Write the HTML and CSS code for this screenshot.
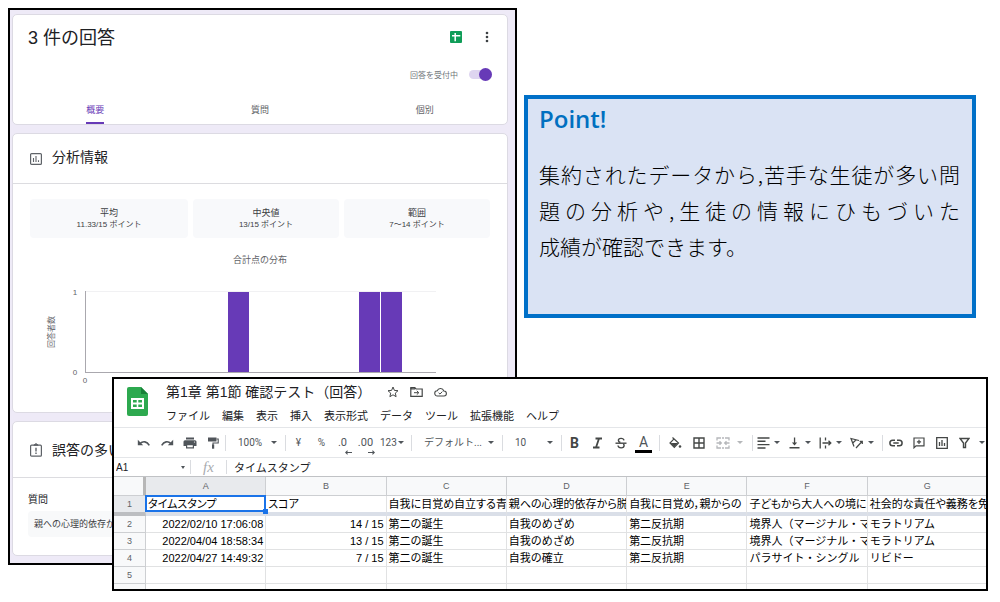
FILE: index.html
```html
<!DOCTYPE html>
<html lang="ja">
<head>
<meta charset="utf-8">
<title>回答の集計</title>
<link rel="stylesheet" href="styles.css">
</head>
<body>
<main class="stage">
  <section class="forms">
    <article class="card">
      <header class="summary">
        <h1 class="summary-title">3 件の回答</h1>
        <button class="plain" aria-label="スプレッドシートで表示">
          <svg width="12" height="12" viewBox="0 0 12 12"><rect width="12" height="12" rx="1" fill="#0f9d58"/><path d="M2 4.7h8.3M5.2 2v8.3" stroke="#fff" stroke-width="1.5"/></svg>
        </button>
        <button class="plain" aria-label="その他">
          <svg width="4" height="12" viewBox="0 0 4 12" fill="#3c4043"><circle cx="2" cy="2" r="1.3"/><circle cx="2" cy="6" r="1.3"/><circle cx="2" cy="10" r="1.3"/></svg>
        </button>
      </header>
      <label class="accepting">回答を受付中<input type="checkbox" class="toggle" checked></label>
      <nav class="tabs">
        <button class="tab tab-active">概要</button>
        <button class="tab">質問</button>
        <button class="tab">個別</button>
      </nav>
    </article>

    <article class="card">
      <header class="card-head">
        <svg width="12" height="12" viewBox="0 0 12 12" fill="none" stroke="#5f6368"><rect x=".6" y=".6" width="10.8" height="10.8" rx="1" stroke-width="1.2"/><path d="M3.5 5v4M6 3v6M8.5 7.3V9" stroke-width="1.1"/></svg>
        <h2 class="card-title">分析情報</h2>
      </header>
      <div class="stats">
        <div class="stat"><span class="stat-name">平均</span><span class="stat-value">11.33/15 ポイント</span></div>
        <div class="stat"><span class="stat-name">中央値</span><span class="stat-value">13/15 ポイント</span></div>
        <div class="stat"><span class="stat-name">範囲</span><span class="stat-value">7～14 ポイント</span></div>
      </div>
      <h3 class="chart-title">合計点の分布</h3>
      <svg class="chart" viewBox="0 0 460 120" role="img" aria-label="合計点の分布">
        <path d="M56 20.5h350" stroke="#f1f1f3"/>
        <g fill="#673ab7"><rect x="198" y="21" width="21" height="80"/><rect x="329" y="21" width="21" height="80"/><rect x="351" y="21" width="21" height="80"/></g>
        <path d="M55.5 20v81M55 101.5h351" stroke="#aaa8ae" fill="none"/>
        <g class="chart-num"><text x="45" y="24">1</text><text x="45" y="104">0</text>
        <text x="55" y="112">0</text><text x="99" y="112">2</text><text x="143" y="112">4</text><text x="187" y="112">6</text><text x="230" y="112">8</text><text x="274" y="112">10</text><text x="318" y="112">12</text><text x="362" y="112">14</text><text x="405" y="112">16</text></g>
        <text class="chart-axis" transform="translate(24 61) rotate(-90)">回答者数</text>
      </svg>
    </article>

    <article class="card card-last">
      <header class="card-head card-head-tall">
        <svg width="12" height="14" viewBox="0 0 12 14" fill="none" stroke="#5f6368"><rect x=".6" y="2.2" width="10.8" height="11" rx="1" stroke-width="1.2"/><path d="M3.8 2.2 6 .6l2.2 1.6z" fill="#5f6368"/><path d="M6 4.8v3.7M6 9.6v1.4" stroke-width="1.4"/></svg>
        <h2 class="card-title">誤答の多い</h2>
      </header>
      <h3 class="question-label">質問</h3>
      <p class="question">親への心理的依存か</p>
    </article>
  </section>

  <aside class="point">
    <h2 class="point-title">Point!</h2>
    <p class="point-text"><span class="line spread">集約されたデータから,苦手な生徒が多い問</span><span class="line spread">題の分析や,生徒の情報にひもづいた</span><span class="line">成績が確認できます。</span></p>
  </aside>

  <section class="sheet">
    <header class="sheet-head">
      <svg width="21" height="29" viewBox="0 0 21 29"><path d="M2 0h12l7 7v20a2 2 0 0 1-2 2H2a2 2 0 0 1-2-2V2a2 2 0 0 1 2-2z" fill="#2da94f"/><path d="M14 0l7 7h-7z" fill="#188038"/><path d="M4 11h13v11H4z" fill="#fff"/><path d="M6 13h3.7v2.5H6zM11.3 13H15v2.5h-3.7zM6 17.5h3.7V20H6zM11.3 17.5H15V20h-3.7z" fill="#2da94f"/></svg>
      <div class="sheet-names">
        <div class="doc-row">
          <h1 class="doc-title">第1章 第1節 確認テスト（回答）</h1>
          <button class="plain" aria-label="スター"><svg width="12" height="12" viewBox="0 0 12 12" fill="none" stroke="#444746"><path d="M6 1l1.4 3.4 3.6.3-2.7 2.4.8 3.6L6 8.8l-3.1 1.9.8-3.6L1 4.7l3.6-.3z"/></svg></button>
          <button class="plain" aria-label="移動"><svg width="13" height="12" viewBox="0 0 13 12" fill="none" stroke="#444746"><path d="M.8 1.6h4l1.2 1.4h6.2v7.4H.8z" stroke-width="1.2"/><path d="M1 2h4v1H1z"/><path d="M4 6.7h4.5M6.8 4.8l2 1.9-2 1.9"/></svg></button>
          <button class="plain" aria-label="保存済み"><svg width="13" height="12" viewBox="0 0 13 12" fill="none" stroke="#444746"><path d="M3.5 10a2.6 2.6 0 0 1-.3-5.200A3.500 3.500 0 0 1 9.800 5 2.500 2.500 0 0 1 10 10z" stroke-width="1.100"/><path d="M4.600 6.800l1.400 1.300 2.300-2.500"/></svg></button>
        </div>
        <nav class="menus">
          <button class="menu">ファイル</button><button class="menu">編集</button><button class="menu">表示</button><button class="menu">挿入</button><button class="menu">表示形式</button><button class="menu">データ</button><button class="menu">ツール</button><button class="menu">拡張機能</button><button class="menu">ヘルプ</button>
        </nav>
      </div>
    </header>

    <div class="toolbar">
      <button class="tool" aria-label="元に戻す"><svg width="14" height="12" viewBox="0 0 14 12" fill="none" stroke="#50555a" stroke-width="1.600"><path d="M3 6.500c3-2.800 7-2.200 9.300 1.800"/><path d="M.8 2.800v5.400h5.400z" fill="#50555a" stroke="none"/></svg></button>
      <button class="tool" aria-label="やり直し"><svg width="14" height="12" viewBox="0 0 14 12" fill="none" stroke="#50555a" stroke-width="1.600"><path d="M11 6.500c-3-2.800-7-2.200-9.300 1.800"/><path d="M13.200 2.800v5.400H7.800z" fill="#50555a" stroke="none"/></svg></button>
      <button class="tool" aria-label="印刷"><svg width="14" height="12" viewBox="0 0 14 12" fill="#50555a"><path d="M3 .5h8v2H3zM2 3.300h10a1.500 1.500 0 0 1 1.500 1.500V9H11V7H3v2H.5V4.800A1.500 1.500 0 0 1 2 3.300z"/><path d="M3.600 7.600h6.800v3.200H3.600z" fill="none" stroke="#50555a" stroke-width="1.200"/><circle cx="11.500" cy="5" r=".6" fill="#fff"/></svg></button>
      <button class="tool" aria-label="書式を貼り付け"><svg width="12" height="12" viewBox="0 0 12 12"><path d="M1 .5h8.500v4H1z" fill="#50555a"/><path d="M9.500 2h1.700v4H6v2" fill="none" stroke="#50555a" stroke-width="1.100"/><path d="M5 7.500h2.200v4.200H5z" fill="#50555a"/></svg></button>
      <span class="sep"></span>
      <span class="pick pick-zoom"><select aria-label="ズーム"><option>100%</option></select></span>
      <span class="sep"></span>
      <button class="tool">¥</button>
      <button class="tool">%</button>
      <button class="tool tool-decimal" aria-label="小数点以下の桁数を減らす"><span class="decimal">.0</span><svg class="under" width="7" height="5" viewBox="0 0 7 5" fill="#50555a"><path d="M0 2.500L2.500 0v2H7v1H2.500v2z"/></svg></button>
      <button class="tool tool-decimal" aria-label="小数点以下の桁数を増やす"><span class="decimal">.00</span><svg class="under" width="7" height="5" viewBox="0 0 7 5" fill="#50555a"><path d="M7 2.500L4.500 0v2H0v1h4.500v2z"/></svg></button>
      <button class="tool more more-format">123</button>
      <span class="sep"></span>
      <span class="pick pick-font"><select aria-label="フォント"><option>デフォルト...</option></select></span>
      <span class="sep"></span>
      <span class="pick pick-size"><select aria-label="フォントサイズ"><option>10</option></select></span>
      <span class="sep"></span>
      <button class="tool" aria-label="太字"><b class="glyph">B</b></button>
      <button class="tool" aria-label="斜体"><svg width="11" height="12" viewBox="0 0 11 12" stroke="#444746" stroke-width="1.800"><path d="M3.500 1.500H10M1 10.500h6.500M7 1.500l-3 9"/></svg></button>
      <button class="tool" aria-label="取り消し線"><svg width="12" height="12" viewBox="0 0 12 12" fill="none" stroke="#444746" stroke-width="1.400"><path d="M9 3.400C8.500.600 3.400.700 3.400 3.400c0 1 .7 1.700 2 2.100M3 8.500c.4 3.200 6.100 3 6.100 0 0-.7-.3-1.200-.8-1.600"/><path d="M.5 6.200h11"/></svg></button>
      <button class="tool" aria-label="テキストの色"><span class="ink">A</span></button>
      <span class="sep sep-wide"></span>
      <button class="tool" aria-label="塗りつぶしの色"><svg width="13" height="12" viewBox="0 0 13 12"><path d="M3.500.500l6 5.500-4.200 4.300L1 6l3.800-3.800" fill="none" stroke="#444746" stroke-width="1.200"/><path d="M1.500 6h7.500l-3.700 4z" fill="#444746"/><circle cx="11" cy="9.500" r="1.300" fill="#444746"/></svg></button>
      <button class="tool" aria-label="枠線"><svg width="12" height="12" viewBox="0 0 12 12" fill="none" stroke="#444746" stroke-width="1.400"><path d="M1 1h10v10H1zM6 1v10M1 6h10"/></svg></button>
      <button class="tool more more-merge" aria-label="セルを結合"><svg width="14" height="12" viewBox="0 0 14 12" fill="none" stroke="#b5b7ba" stroke-width="1.300"><path d="M5 1H1v2.500M9 1h4v2.500M5 11H1V8.500M9 11h4V8.500M6 1h2M6 11h2M.5 6h4.500M13.500 6H9M3.500 4.300 5.300 6 3.500 7.700M10.500 4.300 8.700 6l1.800 1.700"/></svg></button>
      <span class="sep sep-wide"></span>
      <button class="tool more" aria-label="水平方向の配置"><svg width="13" height="12" viewBox="0 0 13 12" stroke="#444746" stroke-width="1.400"><path d="M.5 1h12M.5 4.300h8M.5 7.600h12M.5 11h8"/></svg></button>
      <button class="tool more" aria-label="垂直方向の配置"><svg width="13" height="12" viewBox="0 0 13 12" fill="#444746"><path d="M1.500 10h10v1.500h-10zM5.900.500h1.300v5h2L6.500 8.400 3.900 5.500h2z"/></svg></button>
      <button class="tool more" aria-label="テキストの折り返し"><svg width="13" height="12" viewBox="0 0 13 12" fill="none" stroke="#444746" stroke-width="1.300"><path d="M1.200.500v11M6.500.500v3M6.500 8.500v3M3.500 6h8M9.500 3.800 11.800 6 9.500 8.200"/></svg></button>
      <button class="tool more" aria-label="テキストの回転"><svg width="14" height="12" viewBox="0 0 14 12" fill="none" stroke="#444746" stroke-width="1.200"><path d="M4 9.500 1 1.500l8 2M3 5.800l3.200-3M6 11l6-6.500M9.700 4.300h2.600v2.600"/></svg></button>
      <span class="sep"></span>
      <button class="tool" aria-label="リンクを挿入"><svg width="14" height="12" viewBox="0 0 14 12" fill="none" stroke="#444746" stroke-width="1.500"><path d="M6 3.200H3.700a2.800 2.800 0 0 0 0 5.600H6M8 3.200h2.300a2.800 2.800 0 0 1 0 5.600H8M4.300 6h5.400"/></svg></button>
      <button class="tool" aria-label="コメントを挿入"><svg width="12" height="12" viewBox="0 0 12 12" fill="none" stroke="#444746" stroke-width="1.200"><path d="M1 1h10v7.800H3L1 10.800zM6 2.800v4.200M3.900 4.900h4.200"/></svg></button>
      <button class="tool" aria-label="グラフを挿入"><svg width="12" height="12" viewBox="0 0 12 12" fill="none" stroke="#444746" stroke-width="1.300"><path d="M.7.700h10.600v10.600H.7zM3.500 5v4M6 3v6M8.500 6v3"/></svg></button>
      <button class="tool" aria-label="フィルタを作成"><svg width="11" height="12" viewBox="0 0 11 12" fill="none" stroke="#444746" stroke-width="1.400"><path d="M1 1.500h9L6.500 6v4.500h-2V6z"/></svg></button>
      <button class="tool more more-only" aria-label="フィルタ表示"></button>
    </div>

    <div class="formula">
      <span class="pick pick-name"><input aria-label="名前ボックス" value="A1"></span>
      <span class="sep"></span>
      <i class="fx">fx</i>
      <span class="sep"></span>
      <input class="formula-input" aria-label="数式" value="タイムスタンプ">
    </div>

    <div class="grid-wrap">
    <table class="grid">
      <colgroup><col class="col-num"><col><col><col><col><col><col><col></colgroup>
      <thead><tr><th class="corner"></th><th class="on">A</th><th>B</th><th>C</th><th>D</th><th>E</th><th>F</th><th>G</th></tr></thead>
      <tbody>
        <tr class="frozen"><th class="on">1</th><td class="selected">タイムスタンプ</td><td>スコア</td><td>自我に目覚め自立する青</td><td>親への心理的依存から脱</td><td>自我に目覚め，親からの</td><td>子どもから大人への境に</td><td>社会的な責任や義務を免</td></tr>
        <tr><th>2</th><td class="num">2022/02/10 17:06:08</td><td class="num">14 / 15</td><td>第二の誕生</td><td>自我のめざめ</td><td>第二反抗期</td><td>境界人（マージナル・マ</td><td>モラトリアム</td></tr>
        <tr><th>3</th><td class="num">2022/04/04 18:58:34</td><td class="num">13 / 15</td><td>第二の誕生</td><td>自我のめざめ</td><td>第二反抗期</td><td>境界人（マージナル・マ</td><td>モラトリアム</td></tr>
        <tr><th>4</th><td class="num">2022/04/27 14:49:32</td><td class="num">7 / 15</td><td>第二の誕生</td><td>自我の確立</td><td>第二反抗期</td><td>パラサイト・シングル</td><td>リビドー</td></tr>
        <tr><th>5</th><td></td><td></td><td></td><td></td><td></td><td></td><td></td></tr>
        <tr><th>6</th><td></td><td></td><td></td><td></td><td></td><td></td><td></td></tr>
      </tbody>
    </table>
    </div>
  </section>
</main>
</body>
</html>
```
FILE: styles.css
```css
* { box-sizing: border-box; }
body { margin: 0; background: #fff; color: #202124; font-family: "Liberation Sans", "Noto Sans CJK JP", sans-serif; }
h1, h2, h3, p { margin: 0; font-weight: 400; }
button, input, select { margin: 0; padding: 0; border: 0; background: none; color: inherit; font: inherit; }
svg { display: block; flex: none; }

.stage {
  display: grid;
  grid-template-columns: 104px minmax(0, 405fr) 7px minmax(0, 452fr) 12px;
  grid-template-rows: 369px 188px 26px;
  padding: 8px 12px 0 8px;
}

/* Response summary */
.forms { grid-area: 1 / 1 / 3 / 3; display: flex; flex-direction: column; gap: 8px; padding: 4px 7px 7px 2px; border: 2px solid #000; background: #eeeaf7; overflow: hidden; }
.card { border: 1px solid #dcdae3; border-radius: 5px; background: #fff; }
.card-last { flex: 1; }
.summary { display: flex; align-items: center; gap: 23px; height: 44px; padding: 0 18px 0 15px; }
.summary-title { flex: 1; padding-top: 2px; font-size: 18px; line-height: 24px; }
.plain { display: flex; }
.accepting { display: flex; align-items: center; justify-content: flex-end; gap: 11px; height: 30px; padding-right: 15px; color: #70757a; font-size: 8px; }
.toggle { appearance: none; display: flex; align-items: center; justify-content: flex-end; width: 23px; height: 9px; border-radius: 5px; background: #ded5f0; }
.toggle::before { content: ""; flex: none; width: 13px; height: 13px; border-radius: 50%; background: #673ab7; }
.tabs { display: grid; grid-template-columns: repeat(3, 1fr); justify-items: center; height: 35px; }
.tab { align-self: end; padding-bottom: 5px; border-bottom: 2px solid transparent; color: #5f6368; font-size: 9px; line-height: 14px; }
.tab-active { border-bottom-color: #673ab7; color: #673ab7; }
.card-head { display: flex; align-items: center; gap: 10px; height: 50px; padding-left: 17px; border-bottom: 1px solid #dcdce0; }
.card-head-tall { height: 56px; }
.card-title { padding-bottom: 3px; font-size: 14px; line-height: 20px; }
.card-head-tall .card-title { padding-bottom: 0; }
.stats { display: grid; grid-template-columns: 158fr 146fr 146fr; gap: 5px; padding: 15px 17px 0; }
.stat { display: flex; flex-direction: column; align-items: center; padding: 8px 0 7px; border-radius: 4px; background: #f8f9fb; color: #3c4043; }
.stat-name { font-size: 9px; line-height: 12px; }
.stat-value { font-size: 8px; line-height: 12px; }
.chart-title { padding-top: 14px; color: #5f6368; font-size: 9px; line-height: 16px; text-align: center; }
.chart { width: calc(100% - 34px); margin: 3px 17px 21px; }
.chart-num { fill: #5f6368; font-size: 8px; text-anchor: middle; }
.chart-axis { fill: #5f6368; font-size: 8px; text-anchor: middle; }
.question-label { padding: 14px 15px 3px; font-size: 10px; line-height: 16px; }
.question { margin: 0 15px; padding: 5px 6px; border-radius: 4px; background: #f8f9fa; color: #3c4043; font-size: 9px; line-height: 16px; }

/* Note */
.point { grid-area: 1 / 4 / 2 / 5; margin: 87px 0 59px; padding: 4px 12px 4px 11px; border: 4px solid #0070c8; background: #dae3f4; }
.point-title { color: #0070c0; font: 600 24px/32px "Open Sans", sans-serif; }
.point-text { padding-top: 21px; color: #000; font: 300 21px/36px "Noto Sans CJK JP", sans-serif; }
.line { display: block; white-space: nowrap; }
.spread { text-align-last: justify; }

/* Spreadsheet */
.sheet { grid-area: 2 / 2 / 4 / 6; display: flex; flex-direction: column; min-height: 0; border: 2px solid #000; background: #fff; overflow: hidden; }
.sheet-head { flex: none; display: flex; gap: 18px; height: 48px; padding: 8px 13px 0; }
.sheet-names { min-width: 0; }
.doc-row { display: flex; align-items: center; gap: 11px; margin-top: -5px; }
.doc-title { margin-right: 5px; font-size: 14px; line-height: 20px; }
.menus { display: flex; gap: 12px; padding-top: 6px; }
.menu { color: #202124; font-size: 11px; line-height: 16px; white-space: nowrap; }
.toolbar { flex: none; display: flex; align-items: center; height: 31px; padding-left: 18px; border: 1px solid #e4e6e9; border-width: 1px 0; color: #50555a; font-family: Roboto, "Noto Sans CJK JP", sans-serif; font-size: 10px; }
.tool { flex: none; display: grid; place-items: center; width: 23px; height: 24px; }
.tool-decimal { padding-right: 4px; }
.decimal { grid-area: 1 / 1; font-size: 11px; }
.under { grid-area: 1 / 1; align-self: end; justify-self: end; }
.glyph { color: #444746; font-size: 14px; }
.ink { width: 17px; border-bottom: 3px solid #000; font-size: 14px; line-height: 15px; text-align: center; margin-top: 3px; }
.sep { flex: none; width: 3px; height: 16px; border: solid #fff; border-width: 0 1px; background: #dadce0; }
.sep-wide { margin: 0 3px; }
.more { display: flex; align-items: center; gap: 4px; width: 31px; }
.more::after, .pick::after { content: ""; flex: none; border: solid transparent; border-width: 3px 3px 0; border-top-color: #50555a; }
.more-format { gap: 1px; padding-left: 1px; }
.more-merge { width: 38px; padding-left: 6px; gap: 7px; }
.more-merge::after { border-top-color: #b5b7ba; }
.more-only { padding-left: 3px; }
.pick { flex: none; display: grid; align-items: center; }
.pick > *, .pick::after { grid-area: 1 / 1; }
.pick::after { justify-self: end; margin-right: 7px; }
.pick select { appearance: none; width: 100%; padding-left: 11px; }
.pick-zoom { width: 57px; }
.pick-font { width: 88px; }
.pick-size { width: 56px; }
.formula { flex: none; display: flex; align-items: center; height: 18px; font-size: 11px; }
.formula .sep { height: 14px; }
.pick-name { width: 75px; font-size: 10px; }
.pick-name::after { margin-right: 4px; border-width: 3px 2px 0; }
.pick-name input { width: 100%; padding-left: 2px; }
.fx { width: 33px; color: #a8abaf; font: italic 15px/18px "Liberation Serif", serif; text-align: center; }
.formula-input { flex: 1; min-width: 0; padding-left: 6px; }
.grid-wrap { flex: 1; min-height: 0; overflow: hidden; }
.grid { width: calc(100% + 2px); table-layout: fixed; border-collapse: separate; border-spacing: 0; border-top: 1px solid #c0c2c5; font-size: 11px; }
.col-num { width: 32px; }
.grid th { height: 17px; padding: 0; border: solid #cdcfd2; border-width: 0 1px 1px 0; background: #f8f9fa; color: #5f6368; font-size: 9px; font-weight: 400; line-height: 12px; }
.grid thead th { height: 19px; }
.grid .corner { border-right: 3px solid #b7b7b7; }
.grid th.on { background: #e8eaed; }
.grid td { padding: 0 0 0 2px; border: solid #e1e2e3; border-width: 0 1px 1px 0; color: #000; line-height: 16px; overflow: hidden; white-space: nowrap; }
.grid .num { padding-right: 2px; text-align: right; }
.grid .frozen td { border-bottom: 4px solid #dadfe8; font-feature-settings: "palt"; }
.grid .frozen th { border-bottom: 4px solid #bcbec1; }
.grid .selected { position: relative; overflow: visible; }
.selected::before { content: ""; position: absolute; inset: -1px -1px 0 -1px; border: 2px solid #1a73e8; }
.selected::after { content: ""; position: absolute; right: -3px; bottom: -2px; width: 5px; height: 5px; background: #1a73e8; }
```
